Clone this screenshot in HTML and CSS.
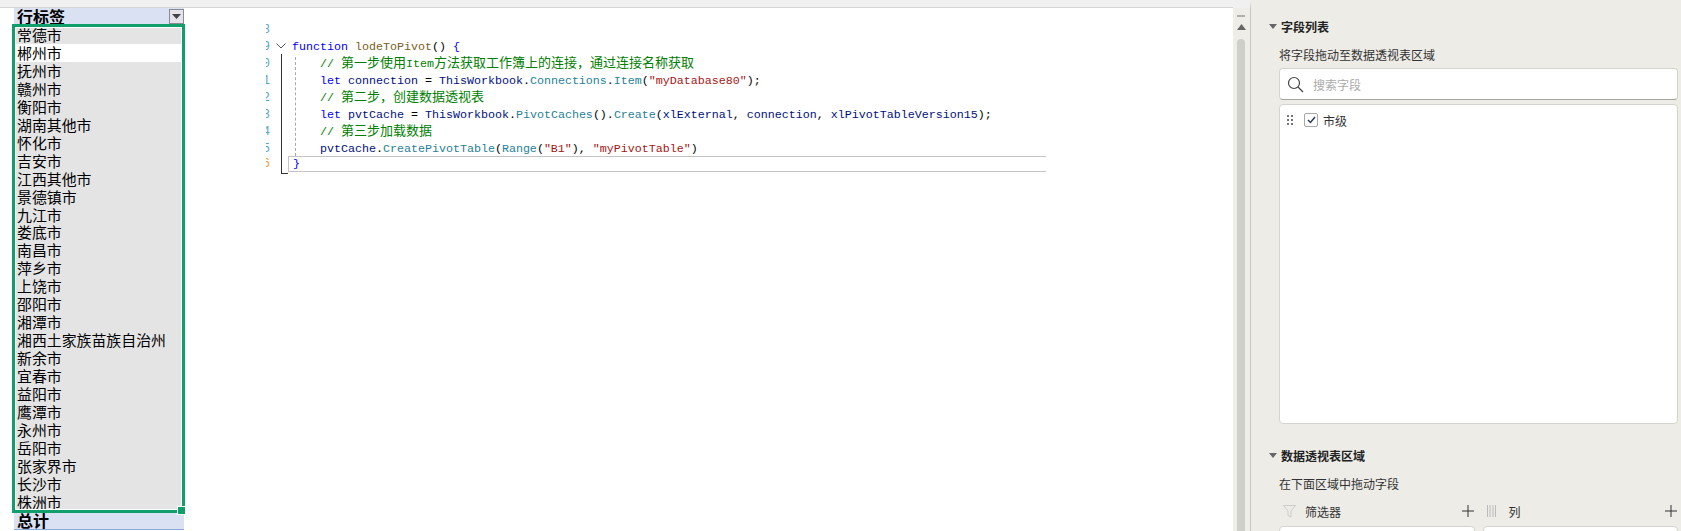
FILE: index.html
```html
<!DOCTYPE html>
<html lang="zh">
<head>
<meta charset="utf-8">
<title>透视表</title>
<link rel="stylesheet" href="styles.css">
</head>
<body>
<div class="app">
  <div class="main">
    <div class="topbar"></div>
    <div class="workspace">
      <section class="pivot">
        <div class="pivot-head"><span>行标签</span><span class="drop"><svg width="9" height="5" viewBox="0 0 9 5"><path d="M0 0h9L4.500 5z" fill="#444"/></svg></span></div>
        <div class="selection">
          <div class="rows">
            <div class="row">常德市</div>
            <div class="row active">郴州市</div>
            <div class="row">抚州市</div>
            <div class="row">赣州市</div>
            <div class="row">衡阳市</div>
            <div class="row">湖南其他市</div>
            <div class="row">怀化市</div>
            <div class="row">吉安市</div>
            <div class="row">江西其他市</div>
            <div class="row">景德镇市</div>
            <div class="row">九江市</div>
            <div class="row">娄底市</div>
            <div class="row">南昌市</div>
            <div class="row">萍乡市</div>
            <div class="row">上饶市</div>
            <div class="row">邵阳市</div>
            <div class="row">湘潭市</div>
            <div class="row">湘西土家族苗族自治州</div>
            <div class="row">新余市</div>
            <div class="row">宜春市</div>
            <div class="row">益阳市</div>
            <div class="row">鹰潭市</div>
            <div class="row">永州市</div>
            <div class="row">岳阳市</div>
            <div class="row">张家界市</div>
            <div class="row">长沙市</div>
            <div class="row">株洲市</div>
          </div>
          <span class="handle"></span>
        </div>
        <div class="pivot-total">总计</div>
      </section>
      <section class="editor">
        <svg class="chevron" width="10" height="6" viewBox="0 0 10 6"><path d="M.5.500 5 5 9.500.500" fill="none" stroke="#555"/></svg>
        <span class="guide-fold"></span>
        <span class="guide-indent"></span>
        <div class="line"><span class="num">8</span><code class="code"></code></div>
        <div class="line"><span class="num">9</span><code class="code"><span class="kw">function</span> <span class="fn">lodeToPivot</span>() <span class="kw">{</span></code></div>
        <div class="line"><span class="num">0</span><code class="code in"><span class="cm">// <span class="cjk">第一步使用</span>Item<span class="cjk">方法获取工作簿上的连接，通过连接名称获取</span></span></code></div>
        <div class="line"><span class="num">1</span><code class="code in"><span class="kw">let</span> <span class="vr">connection</span> = <span class="vr">ThisWorkbook</span>.<span class="ty">Connections</span>.<span class="ty">Item</span>(<span class="st">"myDatabase80"</span>);</code></div>
        <div class="line"><span class="num">2</span><code class="code in"><span class="cm">// <span class="cjk">第二步，创建数据透视表</span></span></code></div>
        <div class="line"><span class="num">3</span><code class="code in"><span class="kw">let</span> <span class="vr">pvtCache</span> = <span class="vr">ThisWorkbook</span>.<span class="ty">PivotCaches</span>().<span class="ty">Create</span>(<span class="vr">xlExternal</span>, <span class="vr">connection</span>, <span class="vr">xlPivotTableVersion15</span>);</code></div>
        <div class="line"><span class="num">4</span><code class="code in"><span class="cm">// <span class="cjk">第三步加载数据</span></span></code></div>
        <div class="line"><span class="num">5</span><code class="code in"><span class="vr">pvtCache</span>.<span class="ty">CreatePivotTable</span>(<span class="ty">Range</span>(<span class="st">"B1"</span>), <span class="st">"myPivotTable"</span>)</code></div>
        <div class="line current-line"><span class="num now">6</span><code class="code current"><span class="kw">}</span></code></div>
      </section>
    </div>
  </div>
  <div class="scroll">
    <span class="scroll-dash"></span>
    <svg class="scroll-arrow" width="9" height="6" viewBox="0 0 9 6"><path d="M4.500 0 9 6H0z" fill="#666"/></svg>
    <span class="scroll-thumb"></span>
  </div>
  <aside class="panel">
    <h2 class="title"><span class="tri"></span>字段列表</h2>
    <p class="hint">将字段拖动至数据透视表区域</p>
    <div class="search">
      <svg width="17" height="17" viewBox="0 0 17 17"><circle cx="7" cy="7" r="5.500" fill="none" stroke="#444" stroke-width="1.200"/><path d="m11 11 5 5" stroke="#444" stroke-width="1.200"/></svg>
      <span>搜索字段</span>
    </div>
    <div class="fields">
      <div class="field">
        <svg width="6" height="10" viewBox="0 0 6 10"><path d="M0 0h2v2H0zM4 0h2v2H4zM0 4h2v2H0zM4 4h2v2H4zM0 8h2v2H0zM4 8h2v2H4z" fill="#777"/></svg>
        <span class="check"><svg width="9" height="8" viewBox="0 0 9 8"><path d="m1 4 2.500 2.500L8 1" fill="none" stroke="#2b3a55" stroke-width="1.500"/></svg></span>
        <span>市级</span>
      </div>
    </div>
    <h2 class="title second"><span class="tri"></span>数据透视表区域</h2>
    <p class="hint">在下面区域中拖动字段</p>
    <div class="areas">
      <div class="area">
        <div class="area-head">
          <svg width="13" height="13" viewBox="0 0 13 13"><path d="M.5.500h12L8 6v6l-3-1.500V6z" fill="none" stroke="#ccc"/></svg>
          <span class="area-name">筛选器</span>
          <svg class="plus" width="12" height="12" viewBox="0 0 12 12"><path d="M6 0v12M0 6h12" stroke="#333"/></svg>
        </div>
        <div class="area-box"></div>
      </div>
      <div class="area">
        <div class="area-head">
          <svg width="9" height="12" viewBox="0 0 9 12"><path d="M.5 0v12M3 0v12M6 0v12M8.500 0v12" stroke="#bbb"/></svg>
          <span class="area-name col">列</span>
          <svg class="plus" width="12" height="12" viewBox="0 0 12 12"><path d="M6 0v12M0 6h12" stroke="#333"/></svg>
        </div>
        <div class="area-box"></div>
      </div>
    </div>
  </aside>
</div>
</body>
</html>
```
FILE: styles.css
```css
* { box-sizing: border-box; }
html, body { margin: 0; height: 531px; overflow: hidden; background: #fff; }
body { font-family: "Noto Sans CJK SC", sans-serif; color: #000; }

.app { display: flex; height: 531px; overflow: hidden; }
.main { width: 1233px; flex: none; display: flex; flex-direction: column; }
.topbar { height: 8px; flex: none; background: #f0f0f0; border-bottom: 1px solid #d6d6d6; }
.workspace { display: flex; flex: 1; min-height: 0; }

/* pivot table */
.pivot { width: 173px; margin-left: 12px; flex: none; display: flex; flex-direction: column; }
.pivot-head { height: 16px; margin-left: 2px; margin-right: 1px; background: #d9e1f2; display: flex; justify-content: space-between; font-size: 16px; font-weight: 700; line-height: 16px; padding-left: 3px; white-space: nowrap; }
.drop { width: 15px; height: 15px; margin-top: 1px; background: #e4e4ea; border: 1px solid #8a8a92; display: flex; align-items: center; justify-content: center; }
.selection { position: relative; height: 489px; border: 3px solid #109f6b; background: #fff; padding: 1px; }
.rows { height: 481px; overflow: hidden; }
.row { height: 17.960px; padding-left: 1px; background: #e4e4e4; font-size: 14.900px; line-height: 17.960px; white-space: nowrap; }
.rows .row:first-child { margin-top: -2px; }
.row.active { background: #fff; }
.handle { position: absolute; right: -4px; bottom: -5px; width: 7px; height: 7px; background: #109f6b; border: 1px solid #fff; box-sizing: content-box; }
.pivot-total { height: 17px; margin-left: 2px; margin-right: 1px; background: #d9e1f2; border-bottom: 1px solid #8ea9db; font-size: 16px; font-weight: 700; line-height: 15px; padding-left: 3px; }

/* code editor */
.editor { position: relative; margin-left: 81px; margin-top: 14px; width: 780px; font-family: "Liberation Mono", monospace; font-size: 11.670px; color: #000; }
.line { display: flex; height: 17px; line-height: 17px; }
.current-line { margin-top: -2px; }
.num { width: 4px; flex: none; margin-right: 22px; overflow: hidden; direction: rtl; color: #5aa2c0; font-size: 12px; }
.num.now { color: #f0a030; }
.code { flex: 1; font: inherit; white-space: pre; }
.code.in { padding-left: 28px; }
.code.current { margin-left: -4px; padding-left: 4px; height: 16px; line-height: 15px; border: solid #c4c4c4; border-width: 1px 0 1px 1px; }
.cjk { font-family: "Noto Sans CJK SC", sans-serif; font-size: 13px; line-height: 0; }
.kw { color: #0000ff; }
.fn { color: #795e26; }
.cm { color: #008000; }
.vr { color: #001080; }
.ty { color: #267f99; }
.st { color: #a31515; }
.chevron { position: absolute; left: 10px; top: 21px; }
.guide-fold { position: absolute; left: 15px; top: 32px; width: 7px; height: 120px; border-left: 1px solid #333; border-bottom: 1px solid #333; }
.guide-indent { position: absolute; left: 29px; top: 35px; height: 99px; border-left: 1px dashed #aaa; }

/* scrollbar column */
.scroll { width: 18px; flex: none; position: relative; background: #eeede7; border-right: 1px solid #c9c9c4; border-top: 8px solid #f0f0f0; display: flex; flex-direction: column; align-items: center; padding: 7px 1px 0 0; }
.scroll-dash { width: 8px; height: 2px; background: #b0b0aa; }
.scroll-arrow { margin-top: 7px; }
.scroll-thumb { margin-top: 9px; width: 8px; flex: 1; background: #cfcfc9; border-radius: 4px 4px 0 0; }

/* side panel */
.panel { flex: 1; background: #edece7; padding: 20px 3px 0 28px; font-size: 12px; color: #333; min-width: 0; }
.title { position: relative; margin: 0; padding-left: 2px; font-size: 12px; font-weight: 700; line-height: 14px; color: #222; height: 14px; }
.tri { position: absolute; left: -10px; top: 4px; border: 4px solid transparent; border-top: 5px solid #666; border-bottom: 0; }
.hint { margin: 14px 0 0; line-height: 14px; height: 14px; }
.search { margin-top: 6px; height: 32px; background: #fff; border: 1px solid #d4d3cd; border-bottom-color: #a5a49e; border-radius: 4px; display: flex; align-items: center; padding-left: 7px; gap: 9px; color: #aaa; }
.fields { margin-top: 4px; height: 320px; background: #fff; border: 1px solid #d4d3cd; border-radius: 4px; padding: 8px 7px; }
.field { display: flex; align-items: center; height: 14px; color: #333; }
.check { width: 14px; height: 14px; margin: 0 5px 0 11px; border: 1px solid #a8a8a8; border-radius: 2px; background: #fff; display: flex; align-items: center; justify-content: center; }
.title.second { margin-top: 25px; }
.second + .hint { margin-top: 14px; }
.areas { display: flex; gap: 8px; margin-top: 13px; }
.area { flex: 1; }
.area-head { display: flex; align-items: center; height: 14px; padding-left: 4px; }
.area-name { margin-left: 9px; flex: 1; }
.area-name.col { margin-left: 13px; }
.plus { margin-right: 1px; }
.area-box { margin-top: 8px; height: 60px; background: #fff; border: 1px solid #d4d3cd; border-radius: 4px; }
```
